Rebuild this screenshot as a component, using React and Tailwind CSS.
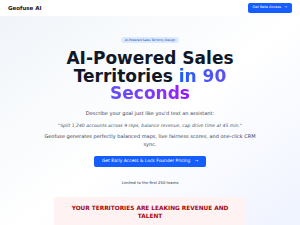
import React from "react";

const Header = () => (
  <header className="flex h-[16px] items-center justify-between bg-white px-[8px] shadow-[0_1px_2px_rgba(0,0,0,0.04)]">
    <span className="text-[5.5px] font-bold text-gray-900">Geofuse AI</span>
    <button className="flex h-[10px] items-center gap-[3px] rounded-[2px] bg-blue-600 px-[5px] text-[3.5px] text-white">
      Get Beta Access <span>→</span>
    </button>
  </header>
);

const App = () => {
  return (
    <div className="min-h-[225px] w-[300px] overflow-hidden font-['DejaVu_Sans',sans-serif] bg-white">
      <Header />
      <section className="flex flex-col items-center bg-gradient-to-br from-slate-100 via-white to-indigo-50 pt-[21px] pb-[14px] text-center">
        <span className="rounded-full bg-blue-100 px-[4px] py-[1px] text-[3px] leading-[4px] font-medium text-blue-800">
          AI-Powered Sales Territory Design
        </span>
        <h1 className="mt-[7px] max-w-[190px] text-[17px] font-bold leading-[17.5px] text-gray-900">
          AI-Powered Sales Territories{" "}
          <span className="bg-gradient-to-r from-blue-600 to-purple-600 bg-clip-text text-transparent">
            in 90 Seconds
          </span>
        </h1>
        <p className="mt-[7px] text-[5px] leading-[7px] text-gray-700">
          Describe your goal just like you'd text an assistant:
        </p>
        <p className="mt-[5px] text-[4.55px] leading-[7px] italic text-gray-600">
          "Split 1,240 accounts across 9 reps, balance revenue, cap drive time at 45 min."
        </p>
        <p className="mt-[3.5px] max-w-[218px] text-[5px] leading-[8px] text-gray-700">
          Geofuse generates perfectly balanced maps, live fairness scores, and one-click CRM sync.
        </p>
        <button className="mt-[8px] flex h-[11px] items-center gap-[4px] rounded-[2px] bg-blue-600 px-[8px] text-[4.4px] text-white">
          Get Early Access &amp; Lock Founder Pricing <span>→</span>
        </button>
        <p className="mt-[12.5px] text-[3.8px] leading-[5px] text-gray-800">Limited to the first 250 teams</p>
        <div className="mt-[12.5px] w-[192px] rounded-[2px] bg-red-50 px-[10px] pt-[7px] pb-[10px]">
          <h2 className="text-[5.8px] font-bold leading-[8px] text-red-800">
            YOUR TERRITORIES ARE LEAKING REVENUE AND TALENT
          </h2>
        </div>
      </section>
    </div>
  );
};

export default App;
